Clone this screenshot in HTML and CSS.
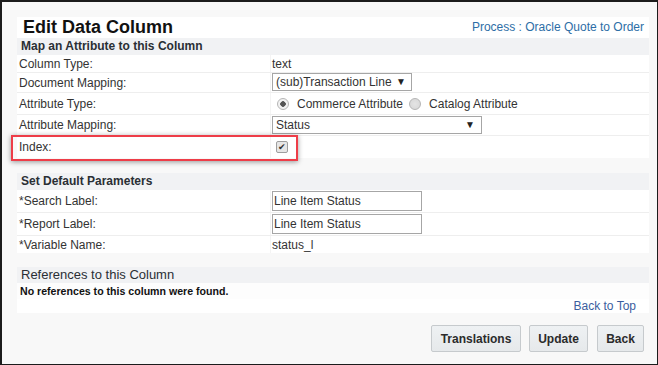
FILE: index.html
```html
<!DOCTYPE html>
<html lang="en">
<head>
  <meta charset="UTF-8" />
  <title>Edit Data Column</title>
  <link rel="stylesheet" href="styles.css">
</head>
<body>
  <div class="frame">
    <div class="title-bar">
      <h1>Edit Data Column</h1>
      <a class="process-link" href="#">Process : Oracle Quote to Order</a>
    </div>

    <section class="block">
      <h2 class="block-head">Map an Attribute to this Column</h2>
      <div class="row row-ct">
        <div class="label">Column Type:</div>
        <div class="value">text</div>
      </div>
      <div class="row row-dm">
        <div class="label">Document Mapping:</div>
        <div class="value">
          <span class="select select-doc">(sub)Transaction Line</span>
        </div>
      </div>
      <div class="row row-at">
        <div class="label">Attribute Type:</div>
        <div class="value">
          <span class="radio checked"></span><span class="radio-text">Commerce Attribute</span>
          <span class="radio second"></span><span class="radio-text">Catalog Attribute</span>
        </div>
      </div>
      <div class="row row-am">
        <div class="label">Attribute Mapping:</div>
        <div class="value">
          <span class="select select-attr">Status</span>
        </div>
      </div>
      <div class="row row-idx">
        <div class="label">Index:</div>
        <div class="value">
          <span class="checkbox">&#10004;</span>
        </div>
      </div>
      <div class="highlight"></div>
    </section>

    <section class="block">
      <h2 class="block-head">Set Default Parameters</h2>
      <div class="row row-in">
        <div class="label">*Search Label:</div>
        <div class="value"><input class="text-input" type="text" value="Line Item Status" /></div>
      </div>
      <div class="row row-in">
        <div class="label">*Report Label:</div>
        <div class="value"><input class="text-input" type="text" value="Line Item Status" /></div>
      </div>
      <div class="row row-ct last">
        <div class="label">*Variable Name:</div>
        <div class="value">status_l</div>
      </div>
    </section>

    <section class="block refs">
      <h2 class="block-head plain">References to this Column</h2>
      <div class="no-refs">No references to this column were found.</div>
      <div class="back-top"><a href="#">Back to Top</a></div>
    </section>

    <div class="actions">
      <button class="btn-translations" type="button">Translations</button>
      <button class="btn-update" type="button">Update</button>
      <button class="btn-back" type="button">Back</button>
    </div>
  </div>
</body>
</html>
```

FILE: styles.css
```css
:root {
  --page-bg: #f8f8f8;
  --head-bg: #f1f2f4;
  --white: #ffffff;
  --text: #333333;
  --line: #eeeeee;
  --link: #2d6ea6;
  --field-border: #a6a6a6;
  --font-family: 'Liberation Sans', Arial, sans-serif;
}

body {
  margin: 0;
  font-family: var(--font-family);
  font-size: 12px;
  color: var(--text);
}

.frame {
  position: relative;
  width: 658px;
  height: 365px;
  box-sizing: border-box;
  border: 2px solid #1c1c1c;
  border-bottom-width: 1px;
  border-right-width: 1px;
  background-color: var(--page-bg);
  padding: 15px 8px 0 15px;
}

.title-bar {
  display: flex;
  justify-content: space-between;
  align-items: center;
  height: 21px;
  background-color: var(--white);
}

h1 {
  margin: 0;
  padding-left: 6px;
  font-size: 18px;
  line-height: 21px;
  font-weight: 700;
  color: #111111;
}

.process-link {
  padding-right: 5px;
  margin-top: -2px;
  color: var(--link);
  text-decoration: none;
}

.block {
  position: relative;
  background-color: var(--white);
  margin-bottom: 15px;
}

.block + .block {
  margin-bottom: 14px;
}

.block-head {
  margin: 0;
  height: 17px;
  padding-left: 4px;
  background-color: var(--head-bg);
  font-size: 12px;
  line-height: 17px;
  font-weight: 700;
  color: #2a2f35;
}

.block-head.plain {
  height: 16px;
  line-height: 16px;
  font-size: 13px;
  font-weight: 400;
}

.row {
  display: grid;
  grid-template-columns: 253px 1fr;
  box-sizing: border-box;
  border-bottom: 1px solid var(--line);
}

.row .label {
  display: flex;
  align-items: center;
  padding-left: 2px;
}

.row .value {
  display: flex;
  align-items: center;
  padding-left: 1px;
  border-left: 1px solid #f4f4f4;
}

.row-ct { height: 18px; }
.row-dm { height: 20px; }
.row-at { height: 22px; }
.row-am { height: 21px; }
.row-idx { height: 22px; border-bottom: none; }
.row-in { height: 23px; }
.row.last { height: 17px; border-bottom: none; }

.select {
  position: relative;
  box-sizing: border-box;
  height: 18px;
  padding-left: 3px;
  border: 1px solid var(--field-border);
  background-color: var(--white);
  line-height: 16px;
  margin-top: -1px;
}

.select::after {
  content: '\25BC';
  position: absolute;
  top: 0;
  font-size: 10px;
  line-height: 16px;
  color: #222222;
}

.select-doc { width: 140px; }
.select-doc::after { right: 5px; }
.select-attr { width: 210px; }
.select-attr::after { right: 6px; }

.radio {
  display: inline-block;
  box-sizing: border-box;
  width: 12px;
  height: 12px;
  margin-left: 5px;
  border: 1px solid #b5b5b5;
  border-radius: 50%;
  background: radial-gradient(circle, #e4e4e4 0, #d6d6d6 100%);
}

.radio.checked {
  background: radial-gradient(circle, #555555 0, #555555 2.5px, #f2f2f2 3px);
}

.radio.second {
  margin-left: 6px;
}

.radio-text {
  margin-left: 8px;
}

.checkbox {
  box-sizing: border-box;
  width: 12px;
  height: 12px;
  margin-left: 4px;
  border: 1px solid #9e9e9e;
  border-radius: 2px;
  background-color: #e6e6e6;
  font-size: 9px;
  line-height: 10px;
  text-align: center;
  color: #333333;
}

.highlight {
  position: absolute;
  left: -6px;
  top: 97px;
  width: 287px;
  height: 26px;
  box-sizing: border-box;
  border: 2px solid #ee3d48;
  box-shadow: 0 1px 5px rgba(0, 0, 0, 0.4);
}

.text-input {
  box-sizing: border-box;
  width: 150px;
  height: 20px;
  margin: 0;
  padding: 0 1px;
  border: 1px solid var(--field-border);
  font-family: var(--font-family);
  font-size: 12px;
  color: var(--text);
}

.block.refs {
  margin-bottom: 12px;
}

.no-refs {
  height: 16px;
  padding-left: 3px;
  font-size: 10.6px;
  line-height: 16px;
  font-weight: 700;
  color: #111111;
  background-color: #fdfdfd;
}

.back-top {
  height: 14px;
  line-height: 14px;
  text-align: right;
  padding-right: 13px;
}

.back-top a {
  color: #3b5e9e;
  text-decoration: none;
}

.actions {
  display: flex;
  justify-content: flex-end;
  gap: 8px;
  padding-right: 5px;
}

button {
  height: 27px;
  padding: 0;
  border: 1px solid #c6cacd;
  border-radius: 2px;
  background: linear-gradient(#eef1f3, #e6e9eb);
  font-family: var(--font-family);
  font-size: 12px;
  font-weight: 700;
  color: #2b2b2b;
}

.btn-translations { width: 90px; }
.btn-update { width: 59px; margin-right: 1px; }
.btn-back { width: 47px; }
```
